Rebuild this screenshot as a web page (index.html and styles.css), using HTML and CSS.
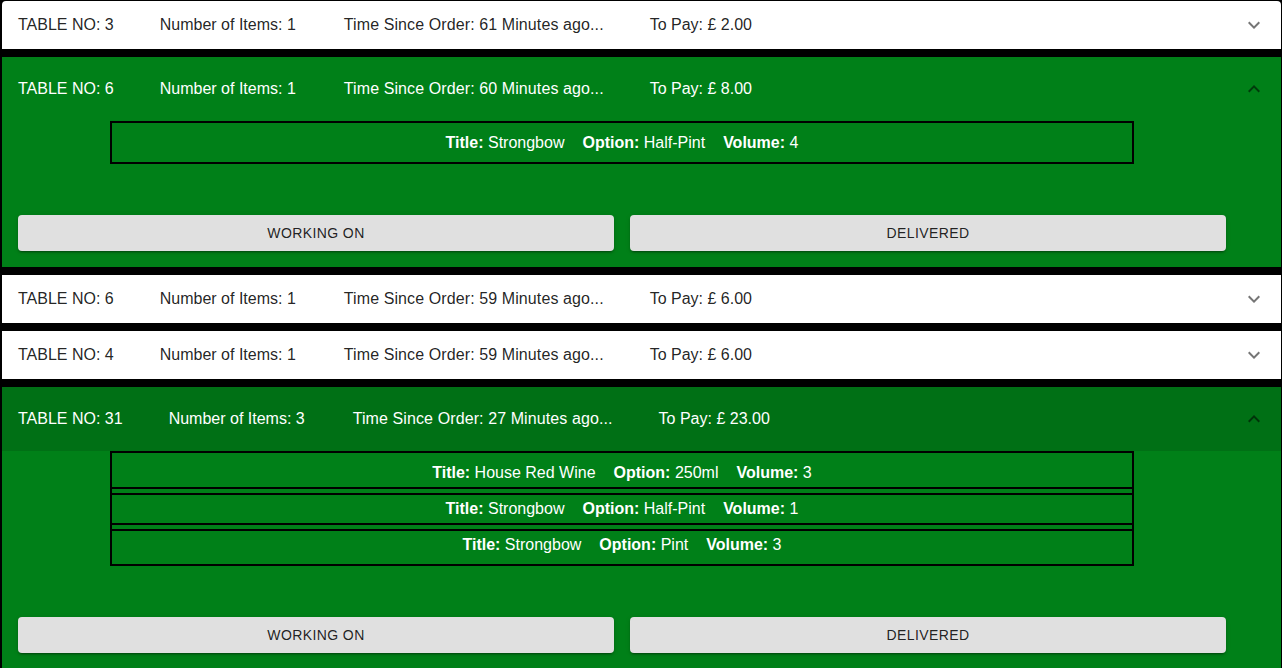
FILE: index.html
```html
<!DOCTYPE html>
<html>
<head>
<meta charset="utf-8">
<link rel="stylesheet" href="styles.css">
</head>
<body>
<div class="list">
  <div class="panel first">
    <div class="summary">
      <div class="cols"><span>TABLE NO: 3</span><span>Number of Items: 1</span><span class="time">Time Since Order: 61 Minutes ago...</span><span>To Pay: £ 2.00</span></div>
      <svg class="icon" viewBox="0 0 24 24"><path d="M16.59 8.59L12 13.17 7.41 8.59 6 10l6 6 6-6z"/></svg>
    </div>
  </div>

  <div class="panel open">
    <div class="summary">
      <div class="cols"><span>TABLE NO: 6</span><span>Number of Items: 1</span><span class="time">Time Since Order: 60 Minutes ago...</span><span>To Pay: £ 8.00</span></div>
      <svg class="icon up" viewBox="0 0 24 24"><path d="M16.59 8.59L12 13.17 7.41 8.59 6 10l6 6 6-6z"/></svg>
    </div>
    <div class="details">
      <div class="items">
        <div class="item"><b>Title:</b> Strongbow<b class="lab">Option:</b> Half-Pint<b class="lab">Volume:</b> 4</div>
      </div>
      <div class="actions">
        <button class="btn">Working on</button>
        <button class="btn">Delivered</button>
      </div>
    </div>
  </div>

  <div class="panel">
    <div class="summary">
      <div class="cols"><span>TABLE NO: 6</span><span>Number of Items: 1</span><span class="time">Time Since Order: 59 Minutes ago...</span><span>To Pay: £ 6.00</span></div>
      <svg class="icon" viewBox="0 0 24 24"><path d="M16.59 8.59L12 13.17 7.41 8.59 6 10l6 6 6-6z"/></svg>
    </div>
  </div>

  <div class="panel">
    <div class="summary">
      <div class="cols"><span>TABLE NO: 4</span><span>Number of Items: 1</span><span class="time">Time Since Order: 59 Minutes ago...</span><span>To Pay: £ 6.00</span></div>
      <svg class="icon" viewBox="0 0 24 24"><path d="M16.59 8.59L12 13.17 7.41 8.59 6 10l6 6 6-6z"/></svg>
    </div>
  </div>

  <div class="panel open">
    <div class="summary focused">
      <div class="cols"><span>TABLE NO: 31</span><span>Number of Items: 3</span><span class="time">Time Since Order: 27 Minutes ago...</span><span>To Pay: £ 23.00</span></div>
      <svg class="icon up" viewBox="0 0 24 24"><path d="M16.59 8.59L12 13.17 7.41 8.59 6 10l6 6 6-6z"/></svg>
    </div>
    <div class="details">
      <div class="items">
        <div class="item"><b>Title:</b> House Red Wine<b class="lab">Option:</b> 250ml<b class="lab">Volume:</b> 3</div>
        <div class="sep"></div>
        <div class="item"><b>Title:</b> Strongbow<b class="lab">Option:</b> Half-Pint<b class="lab">Volume:</b> 1</div>
        <div class="sep"></div>
        <div class="item"><b>Title:</b> Strongbow<b class="lab">Option:</b> Pint<b class="lab">Volume:</b> 3</div>
      </div>
      <div class="actions">
        <button class="btn">Working on</button>
        <button class="btn">Delivered</button>
      </div>
    </div>
  </div>
</div>
</body>
</html>
```
FILE: styles.css
```css
* { box-sizing: border-box; }
html, body { margin: 0; padding: 0; background: #000; }
body {
  font-family: "Liberation Sans", Arial, Helvetica, sans-serif;
  font-size: 16px;
  overflow: hidden;
}
.list {
  display: flex;
  flex-direction: column;
  gap: 8px;
  padding: 1px 1px 0 2px;
}
.panel {
  background: #fff;
  color: rgba(0, 0, 0, 0.87);
  box-shadow: 0 1px 3px rgba(0,0,0,.2), 0 1px 1px rgba(0,0,0,.14), 0 2px 1px -1px rgba(0,0,0,.12);
}
.panel.first { border-radius: 4px 4px 0 0; }
.panel.open { background: #008018; color: #fff; }
.summary {
  display: flex;
  align-items: center;
  height: 48px;
  padding: 0 15px 0 16px;
}
.panel.open .summary { height: 64px; }
.summary.focused { background: rgba(0, 0, 0, 0.12); }
.cols {
  flex: 1;
  display: flex;
  gap: 46px;
  line-height: 20px;
  white-space: nowrap;
}
.cols .time {
  margin-left: 2px;
  letter-spacing: 0.1px;
}
.icon {
  width: 24px;
  height: 24px;
  fill: rgba(0, 0, 0, 0.54);
  flex: none;
}
.icon.up { transform: rotate(180deg); }
.details {
  padding: 0 55px 16px 16px;
}
.items {
  max-width: 1024px;
  margin: 0 auto;
  border: 2px solid #000;
  padding: 6px 0;
}
.item {
  padding: 4px 0 3px;
  line-height: 20px;
  text-align: center;
  color: #fff;
}
.item b { font-weight: bold; }
.item .lab { margin-left: 18px; }
.sep {
  margin-top: 1px;
  height: 8px;
  border-top: 2px solid #000;
  border-bottom: 2px solid #000;
}
.actions {
  margin-top: 51px;
  display: grid;
  grid-template-columns: 1fr 1fr;
  gap: 16px;
}
.btn {
  height: 36px;
  border: 0;
  border-radius: 4px;
  background: #e0e0e0;
  color: rgba(0, 0, 0, 0.87);
  font-family: "Liberation Sans", Arial, Helvetica, sans-serif;
  font-size: 14px;
  letter-spacing: 0.4px;
  text-transform: uppercase;
  box-shadow: 0 3px 1px -2px rgba(0,0,0,.2), 0 2px 2px 0 rgba(0,0,0,.14), 0 1px 5px 0 rgba(0,0,0,.12);
  cursor: pointer;
}
```
